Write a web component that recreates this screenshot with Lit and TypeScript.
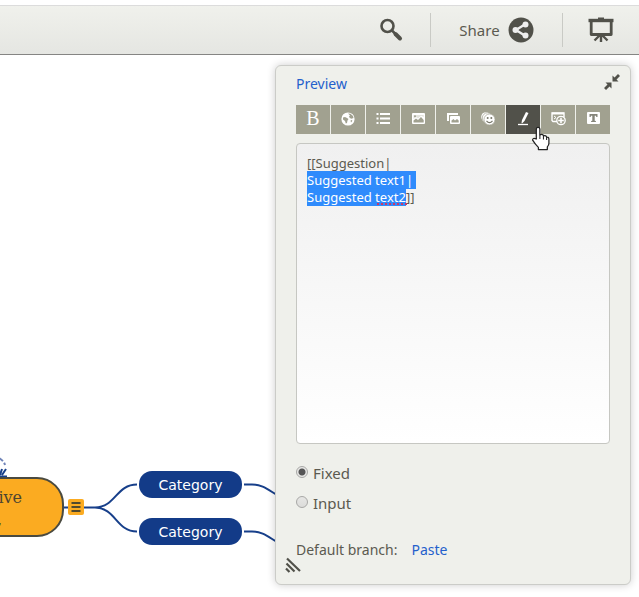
import { LitElement, html, css, svg } from "lit";
import { customElement, query } from "lit/decorators.js";
import { classMap } from "lit/directives/class-map.js";

const TOOLS = [
  { label: "Bold", icon: null },
  {
    label: "Link",
    icon: svg`<circle cx="8" cy="8" r="6.600" fill="#fff"/><path d="M3 6.500l2-.5 2 1 1.500 1-1 1.500L7 12l-1.200.5L5 10 3 8.500zM8 2.500l2.500.2L13 5l.5 2-2 .8L9.800 7 9 5.500l1-1zM10.500 9.500l1.500-.5.3 1-1.300 1.500z" fill="#a1a190"/>`,
  },
  {
    label: "List",
    icon: svg`<path d="M5 3h10M5 7.500h10M5 12h10" stroke="#fff" stroke-width="2"/><path d="M1.500 3h2M1.500 7.500h2M1.500 12h2" stroke="#fff" stroke-width="2"/>`,
  },
  {
    label: "Image",
    icon: svg`<rect x="2" y="2" width="13" height="11" rx="1" fill="#fff"/><path d="M3.500 11.500V9.500L6 7.500l2 1.500 3-3 2.700 3v2.500z" fill="#a1a190"/><path d="M3.500 4h10.200v2L11 4.800 8 7.500 6 6 3.500 8z" fill="#a1a190" opacity=".3"/><circle cx="5" cy="5.200" r="1" fill="#a1a190"/>`,
  },
  {
    label: "Gallery",
    icon: svg`<path d="M2 2h11v2H4v6H2z" fill="#fff"/><rect x="5" y="5" width="10" height="8" rx="1" fill="#fff"/><path d="M6.500 11.500V9.500l2-1.500 1.500 1.500L12 8l1.700 1.500v2z" fill="#a1a190"/>`,
  },
  {
    label: "Emoji",
    icon: svg`<circle cx="6" cy="6" r="4.800" fill="#fff"/><circle cx="7.500" cy="7" r="5.200" fill="#fff" stroke="#a1a190" stroke-width=".7"/><circle cx="9.500" cy="8.500" r="5.500" fill="#fff" stroke="#a1a190" stroke-width=".7"/><circle cx="7.700" cy="7" r="1" fill="#77776a"/><circle cx="11.300" cy="7" r="1" fill="#77776a"/><path d="M6.500 9.800q3 3.600 6 0" fill="none" stroke="#77776a" stroke-width="1.200"/>`,
  },
  {
    label: "Suggestion",
    icon: svg`<path d="M11 1l2.500 1-4 8-2.500 2.500-.5-.5.500-3z" fill="#fff"/><path d="M3 13.500h10" stroke="#fff" stroke-width="1.300"/>`,
  },
  {
    label: "Add widget",
    icon: svg`<path d="M7 10.500H3L2 9.500V2h12v4" fill="none" stroke="#fff" stroke-width="1.400"/><path d="M2 2.500h12" stroke="#fff" stroke-width="2"/><path d="M4 5l2 1.500L4 8" fill="none" stroke="#fff"/><circle cx="11" cy="9.500" r="4.200" fill="#a1a190" stroke="#fff" stroke-width="1.300"/><path d="M8.200 9.500h5.600M11 6.700v5.600" stroke="#fff" stroke-width="1.600"/>`,
  },
  {
    label: "Text",
    icon: svg`<rect x="2" y="1" width="13" height="12" rx="1" fill="#fff"/><path d="M4.500 3h8v3h-1.200L11 4.700h-1.300v5l1.200.3v1H6.100v-1l1.200-.3v-5H6L5.700 6H4.500z" fill="#85857a"/>`,
  },
];

@customElement("app-root")
export class AppRoot extends LitElement {
  @query("textarea") private editor!: HTMLTextAreaElement;

  static styles = css`
    :host {
      display: flex;
      flex-direction: column;
      min-height: 100vh;
      background: #fff;
      color: #5b5a50;
      font: 15px/20px "Noto Sans", sans-serif;
    }
    button {
      border: 0;
      padding: 0;
      margin: 0;
      background: none;
      color: inherit;
      font: inherit;
      display: flex;
      align-items: center;
      justify-content: center;
      gap: 8px;
    }
    svg { display: block; }
    header {
      margin-top: 5px;
      height: 48px;
      border-top: 1px solid #dcdcdc;
      border-bottom: 1px solid #858583;
      background: linear-gradient(#f0f1ec, #e5e6e2);
      display: flex;
      justify-content: flex-end;
      align-items: center;
    }
    header button { height: 34px; }
    .search { width: 78px; }
    .share { width: 133px; border-left: 1px solid #c9cac5; border-right: 1px solid #c9cac5; }
    .present { width: 76px; }
    main {
      position: relative;
      flex: 1;
      overflow: hidden;
      padding: 10px 8px;
      display: flex;
      justify-content: flex-end;
      align-items: flex-start;
    }
    .map { position: absolute; left: 0; top: 0; }
    .node {
      position: absolute;
      box-sizing: border-box;
      background: #133b88;
      color: #fff;
      border-radius: 13px;
      width: 103px;
      height: 27px;
      font: 14px/28px "DejaVu Sans", sans-serif;
      text-align: center;
      left: 139px;
    }
    .first { top: 416px; }
    .second { top: 463px; }
    .root {
      left: -96px;
      top: 422px;
      width: 160px;
      height: 60px;
      border: 2px solid #4a4a40;
      border-radius: 27px;
      background: #fbab21;
      color: #4d4530;
      padding: 8px 40px;
      font: 16px/22px "DejaVu Serif", serif;
      text-align: right;
    }
    .tail { padding-right: 20px; }
    .panel {
      position: relative;
      box-sizing: border-box;
      width: 356px;
      border: 1px solid #cbccc8;
      border-radius: 6px;
      background: #eff0eb;
      box-shadow: 0 0 8px rgba(0, 0, 0, 0.2);
      padding: 8px 20px 24px;
    }
    .head { display: flex; align-items: flex-start; justify-content: space-between; margin-right: -10px; font-size: 14px; }
    a { color: #2460cc; text-decoration: none; }
    .tools { display: grid; grid-template-columns: repeat(9, 1fr); gap: 1px; margin-top: 11px; }
    .tool { height: 29px; background: #a1a190; color: #fff; }
    .tool svg { margin-bottom: 2px; }
    .on { background: #51514a; }
    .bold { font: 20px/26px "Liberation Serif", serif; padding-bottom: 3px; }
    .editor { position: relative; margin-top: 9px; }
    textarea {
      display: block;
      box-sizing: border-box;
      width: 100%;
      height: 301px;
      border: 1px solid #c6c7c2;
      border-radius: 4px;
      background: linear-gradient(#f0f0f0, #fff);
      padding: 11px 10px;
      margin: 0;
      color: #5b5a50;
      font: 13px/17px "Noto Sans", sans-serif;
      outline: none;
      resize: none;
      caret-color: transparent;
    }
    textarea::selection { background: rgba(45, 138, 252, 0.99); color: #fff; }
    .squiggle { position: absolute; left: 81px; top: 60px; width: 30px; border-top: 2px dotted #c8386c; }
    .option { display: flex; align-items: center; gap: 5px; height: 30px; }
    .options { margin: 14px 0 22px; }
    .option input {
      appearance: none;
      width: 12px;
      height: 12px;
      box-sizing: border-box;
      margin: 0 0 2px;
      border: 1px solid #a8a8a6;
      border-radius: 50%;
      background: linear-gradient(#e6e6e4, #dcdcda);
    }
    .option input:checked { background: radial-gradient(circle, #555 0 3px, #e8e8e6 4px); }
    .branch { display: flex; gap: 14px; font-size: 14px; }
    .grip { position: absolute; left: 9px; bottom: 11px; }
    .pointer { position: absolute; left: 254px; top: 59px; }
  `;

  firstUpdated() {
    this.editor.focus({ preventScroll: true });
    this.editor.setSelectionRange(14, this.editor.value.length - 2);
  }

  render() {
    return html`
      <header>
        <button class="search" aria-label="Search">
          <svg width="24" height="24" viewBox="0 0 24 24" fill="none" stroke="#51514a" stroke-linecap="round">
            <circle cx="8.500" cy="8" r="6" stroke-width="2.600" /><path d="M13 12.500l3 3" stroke-width="2.500" /><path d="M16.500 16l4.500 4.500" stroke-width="4" />
          </svg>
        </button>
        <button class="share">
          Share
          <svg width="26" height="26" viewBox="0 0 26 26">
            <circle cx="13" cy="13" r="12.500" fill="#51514a" />
            <path d="M17.500 7L8 13l9.500 6" fill="none" stroke="#eee" stroke-width="2.400" />
            <g fill="#eee"><circle cx="17.500" cy="7.500" r="3" /><circle cx="7.500" cy="13" r="3" /><circle cx="17.500" cy="18.500" r="3" /></g>
          </svg>
        </button>
        <button class="present" aria-label="Present">
          <svg width="26" height="26" viewBox="0 0 26 26" fill="none" stroke="#51514a">
            <path d="M.5 3.500h25" stroke-width="3.400" /><path d="M10 1.500h6" stroke-width="2" />
            <path d="M3.200 4v13.500h20V4" stroke-width="2.800" stroke-linejoin="round" />
            <path d="M13 18v7M11.500 18.500l-5 5M14.500 18.500l5 5" stroke-width="2.400" />
          </svg>
        </button>
      </header>
      <main>
        <svg class="map" width="300" height="530" viewBox="0 0 300 530" fill="none" stroke="#173f8a" stroke-width="2">
          <path d="M63 452.500h32C116 452 116 429.500 137 429.500M95 452.500C116 453 116 476.500 137 476.500" />
          <path d="M244 429.500h8C266 429.500 270 438 290 447M244 476.500h8C266 476.500 270 485 290 494" />
          <path d="M-1 403q5 3 6 7" stroke="#6f83b8" stroke-dasharray="5 2" />
          <path d="M0 421.500h7M0 420l2-6M2 420l4-6" />
          <rect x="68" y="444" width="16" height="16" rx="2" fill="#fbab21" stroke="none" />
          <path d="M71.500 448h9M71.500 452h9M71.500 456h9" stroke="#51492e" stroke-width="1.800" />
        </svg>
        <div class="node root">ive<div class="tail">,</div></div>
        <div class="node first">Category</div>
        <div class="node second">Category</div>
        <section class="panel">
          <div class="head">
            <a href="#preview">Preview</a>
            <button aria-label="Collapse">
              <svg width="16" height="16" viewBox="0 0 16 16" fill="#51514a">
                <path d="M8.500 1.500V7.500H14.500L12.500 5.500 16 2 14 0 10.500 3.500z" /><path d="M7.500 14.500V8.500H1.500L3.500 10.500 0 14 2 16 5.500 12.500z" />
              </svg>
            </button>
          </div>
          <div class="tools">
            ${TOOLS.map(
              (t) => html`<button class=${classMap({ tool: true, on: t.label === "Suggestion", bold: !t.icon })} aria-label=${t.label}>
                ${t.icon ? html`<svg width="16" height="16" viewBox="0 0 16 16" fill="none">${t.icon}</svg>` : "B"}
              </button>`,
            )}
          </div>
          <div class="editor">
            <textarea aria-label="Text" spellcheck="false" .value=${"[[Suggestion|\nSuggested text1|\nSuggested text2]]"}></textarea>
            <div class="squiggle"></div>
          </div>
          <div class="options">
            <label class="option"><input type="radio" name="mode" checked />Fixed</label>
            <label class="option"><input type="radio" name="mode" />Input</label>
          </div>
          <div class="branch"><span>Default branch:</span><a href="#paste">Paste</a></div>
          <svg class="grip" width="16" height="16" viewBox="0 0 16 16" stroke="#51514a" stroke-width="2.200">
            <path d="M2 1.500l13 12.500M1.500 6.500l8 8M1 11.500l3.500 3.500" />
          </svg>
          <svg class="pointer" width="21" height="27" viewBox="0 0 20 25">
            <path d="M6 13V3.500a1.700 1.700 0 0 1 3.400 0V9q3-1 3.500 1 2.600-.6 3 1.200 2.100-.2 2.100 2V17q0 2-1.500 3.500V23H8v-2q-3-3-5.500-7 0-2.500 3.500-1z" fill="#fff" stroke="#222" stroke-width="1.200" stroke-linejoin="round" />
            <path d="M9.400 9v4M12.800 10v3.500M15.800 11v3" stroke="#222" />
          </svg>
        </section>
      </main>
    `;
  }
}
